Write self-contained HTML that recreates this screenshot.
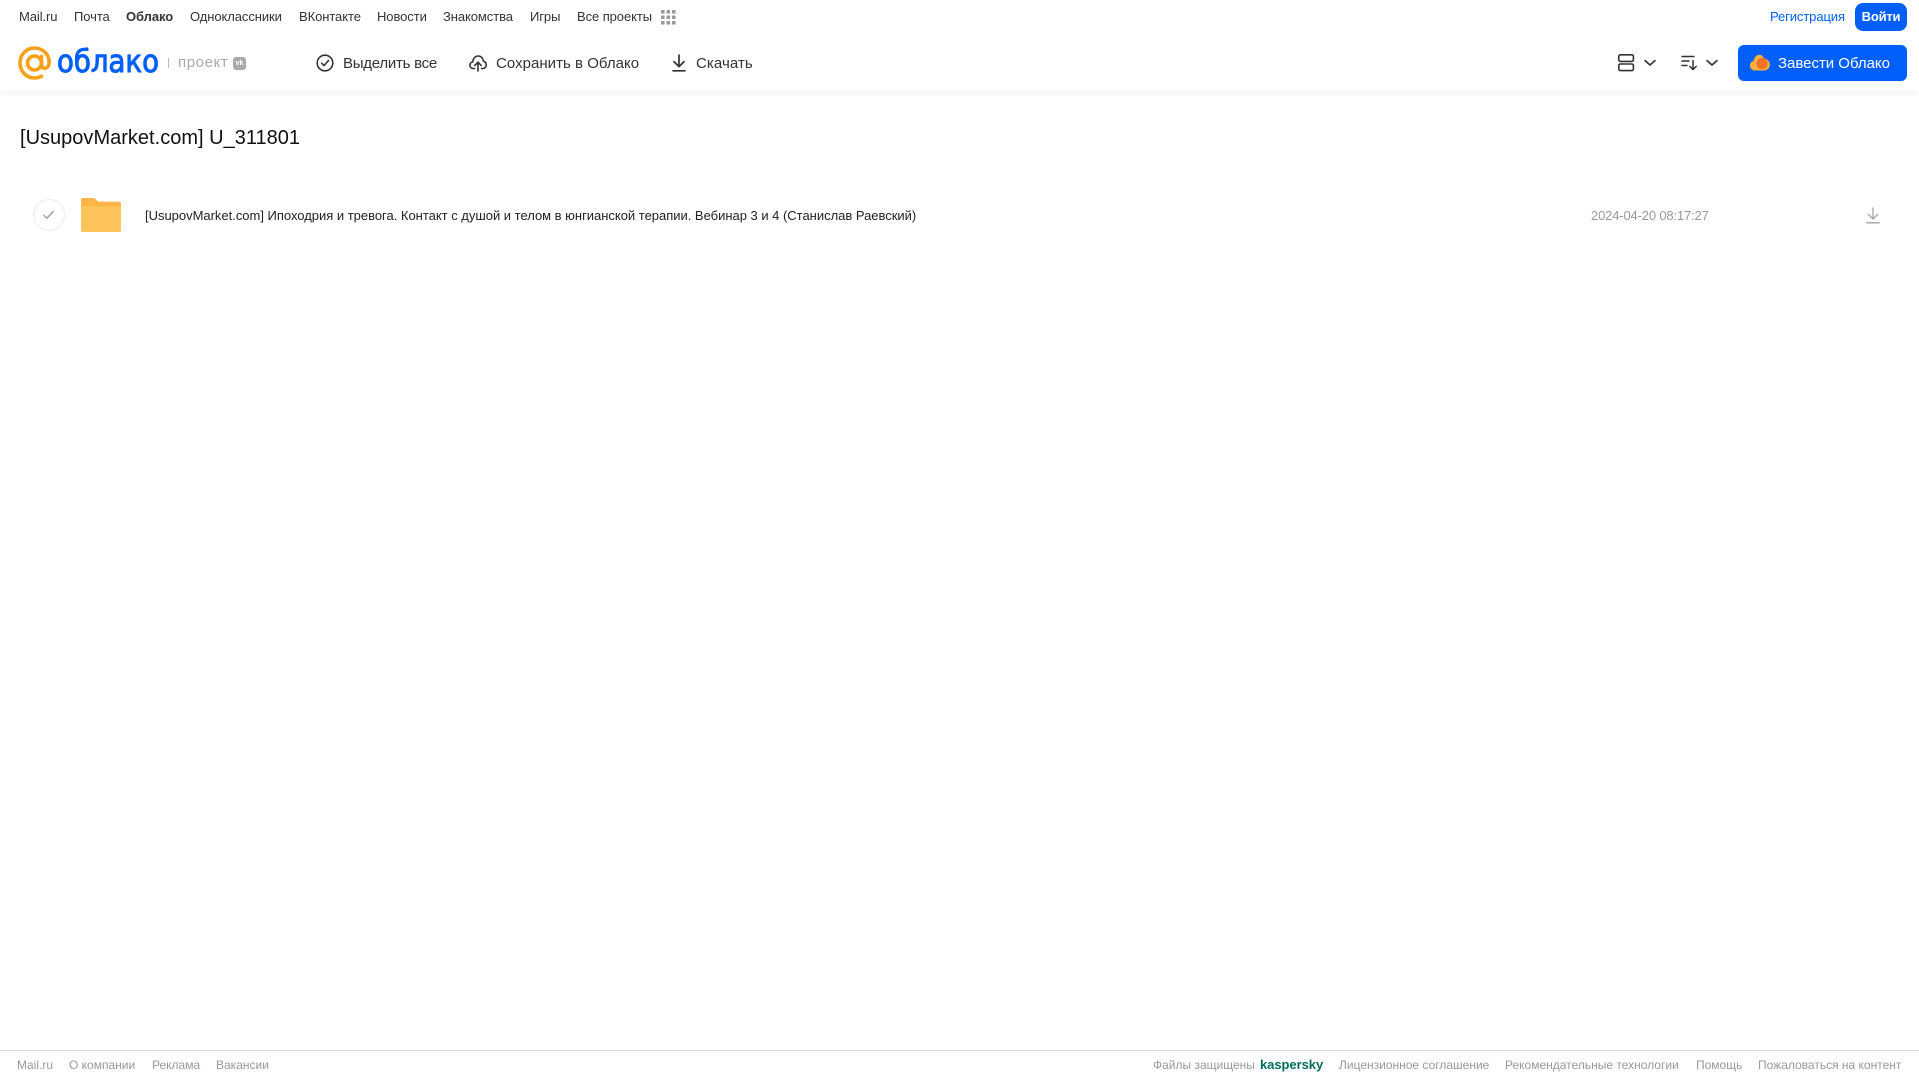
<!DOCTYPE html>
<html lang="ru">
<head>
<meta charset="utf-8">
<title>[UsupovMarket.com] U_311801</title>
<style>
html,body{margin:0;padding:0;width:1919px;height:1079px;overflow:hidden;background:#fff;font-family:"Liberation Sans",Arial,sans-serif;}
.t{position:absolute;white-space:nowrap;line-height:20px;}
.n{top:7px;font-size:13px;color:#333;letter-spacing:-.08px;}
.b{top:54px;font-size:15px;color:#333;}
.f{top:1055px;font-size:12px;color:#999;}
svg{position:absolute;display:block;overflow:visible;}
#shadow{position:absolute;left:0;top:0;width:1919px;height:91px;background:#fff;box-shadow:0 1px 8px rgba(0,0,0,.07);}
#cloudbtn{position:absolute;left:1738px;top:45px;width:169px;height:36px;background:#005ff9;border-radius:6px;}
#login{position:absolute;left:1855px;top:3px;width:52px;height:28px;background:#005ff9;border-radius:8px;color:#fff;font-size:13px;font-weight:bold;line-height:27px;text-align:center;letter-spacing:-.2px;}
#line{position:absolute;left:0;top:1050px;width:1919px;height:1px;background:#d9d9d9;}
</style>
</head>
<body>
<div id="shadow"></div>

<span class="t n" style="left:19px">Mail.ru</span>
<span class="t n" style="left:74px">Почта</span>
<span class="t n" style="left:126px;font-weight:bold">Облако</span>
<span class="t n" style="left:190px">Одноклассники</span>
<span class="t n" style="left:299px">ВКонтакте</span>
<span class="t n" style="left:377px">Новости</span>
<span class="t n" style="left:443px">Знакомства</span>
<span class="t n" style="left:530px">Игры</span>
<span class="t n" style="left:577px">Все проекты</span>
<svg style="left:661px;top:10px" width="15" height="15" viewBox="0 0 15 15" fill="#999">
<rect x="0" y="0" width="3.6" height="3.6" rx=".8"/><rect x="5.5" y="0" width="3.6" height="3.6" rx=".8"/><rect x="11" y="0" width="3.6" height="3.6" rx=".8"/>
<rect x="0" y="5.5" width="3.6" height="3.6" rx=".8"/><rect x="5.5" y="5.5" width="3.6" height="3.6" rx=".8"/><rect x="11" y="5.5" width="3.6" height="3.6" rx=".8"/>
<rect x="0" y="11" width="3.6" height="3.6" rx=".8"/><rect x="5.5" y="11" width="3.6" height="3.6" rx=".8"/><rect x="11" y="11" width="3.6" height="3.6" rx=".8"/>
</svg>

<span class="t" style="left:1770px;top:7px;font-size:13px;color:#005ff9;letter-spacing:-.1px">Регистрация</span>
<div id="login">Войти</div>

<svg style="left:18px;top:46px" width="34" height="35" viewBox="0 0 34 35" fill="none" stroke="#f9a01b" stroke-width="3.6">
<circle cx="16.5" cy="17" r="7"/>
<path d="M23.5 10.5V19.5C23.5 23 29.5 23.5 30.8 19C32.8 10.5 26 2 16.5 2C8 2 2 8.8 2 17C2 25.5 8.5 32 16.5 32C19.3 32 21.5 31.4 23.5 30.2" stroke-linecap="round"/>
</svg>
<span class="t" style="left:57px;top:44px;font-size:31px;line-height:36px;color:#005ff9;font-family:'DejaVu Sans',sans-serif;-webkit-text-stroke:1px #005ff9;transform-origin:0 50%;transform:scaleX(.89)">облако</span>
<div style="position:absolute;left:168px;top:58px;width:1px;height:10px;background:#bbb"></div>
<span class="t" style="left:178px;top:53px;font-size:15px;color:#aaa;letter-spacing:.6px">проект</span>
<div style="position:absolute;left:233px;top:57px;width:13px;height:13px;background:#aaa;border-radius:3px;color:#fff;font-size:7px;line-height:13px;text-align:center;font-weight:bold">vk</div>

<svg style="left:316px;top:54px" width="18" height="18" viewBox="0 0 18 18" fill="none" stroke="#333" stroke-width="1.6">
<circle cx="9" cy="9" r="7.8"/><path d="M5.6 9.2L8 11.6L12.4 6.6" stroke-linecap="round" stroke-linejoin="round"/>
</svg>
<span class="t b" style="left:343px;letter-spacing:-.25px">Выделить все</span>

<svg style="left:469px;top:54px" width="18" height="18" viewBox="0 0 18 18" fill="none" stroke="#333" stroke-width="1.6" stroke-linecap="round" stroke-linejoin="round">
<path d="M5.5 14.5H4.2C2.2 14.5 .9 13 .9 11.2C.9 9.4 2.2 8.2 3.7 8C4 4.6 6.3 2 9.2 2C12 2 14.1 4.2 14.5 7.2C16 7.6 17.2 9 17.2 10.9C17.2 13 15.7 14.5 13.8 14.5H12.5"/>
<path d="M9 17V8.4M5.8 11.4L9 8.2L12.2 11.4"/>
</svg>
<span class="t b" style="left:496px;letter-spacing:.03px">Сохранить в Облако</span>

<svg style="left:671px;top:54px" width="16" height="18" viewBox="0 0 16 18" fill="none" stroke="#333" stroke-width="1.7" stroke-linecap="round" stroke-linejoin="round">
<path d="M8 1V12.2M3 7.6L8 12.6L13 7.6M2 16.8H14"/>
</svg>
<span class="t b" style="left:696px;letter-spacing:.08px">Скачать</span>

<svg style="left:1618px;top:54px" width="16" height="18" viewBox="0 0 16 18" fill="none" stroke="#333" stroke-width="1.6">
<rect x=".8" y=".8" width="14.6" height="6.6" rx="1.6"/><rect x=".8" y="10" width="14.6" height="6.6" rx="1.6"/>
</svg>
<svg style="left:1644px;top:59px" width="12" height="8" viewBox="0 0 13 8" fill="none" stroke="#333" stroke-width="1.8" stroke-linecap="round" stroke-linejoin="round"><path d="M1.2 1.4L6.5 6.2L11.8 1.4"/></svg>
<svg style="left:1681px;top:55px" width="17" height="16" viewBox="0 0 17 16" fill="none" stroke="#333" stroke-width="1.5" stroke-linecap="round" stroke-linejoin="round">
<path d="M1 1.5H13M1 6H8M1 10.5H6M12 5.5V14.5M8.8 11.4L12 14.6L15.2 11.4"/>
</svg>
<svg style="left:1706px;top:59px" width="12" height="8" viewBox="0 0 13 8" fill="none" stroke="#333" stroke-width="1.8" stroke-linecap="round" stroke-linejoin="round"><path d="M1.2 1.4L6.5 6.2L11.8 1.4"/></svg>

<div id="cloudbtn"></div>
<svg style="left:1750px;top:54px" width="20" height="17" viewBox="0 0 20 17">
<path fill="#fbb03b" d="M5 16.5C2.2 16.5 0 14.3 0 11.6C0 9.3 1.6 7.4 3.6 6.9C4.3 3.2 6.6 .7 9.2 .7C11.4 .7 13.2 2.1 14.2 4.6C17.4 4.9 19.8 7.4 19.8 10.6C19.8 13.9 17.3 16.5 14 16.5Z"/>
<circle cx="12" cy="9.6" r="5.6" fill="#f4712b"/>
</svg>
<span class="t" style="left:1778px;top:54px;font-size:15px;color:#fff;letter-spacing:-.02px">Завести Облако</span>

<span class="t" style="left:20px;top:125px;font-size:20px;line-height:26px;color:#111;letter-spacing:.01px">[UsupovMarket.com] U_311801</span>

<div style="position:absolute;left:33px;top:199px;width:30px;height:30px;border:1px solid #ececec;border-radius:50%"></div>
<svg style="left:43px;top:210px" width="11" height="10" viewBox="0 0 11 10" fill="none" stroke="#999" stroke-width="1.4" stroke-linecap="round" stroke-linejoin="round"><path d="M1 5.4L4 8.2L10 1.6"/></svg>

<svg style="left:81px;top:198px" width="40" height="34" viewBox="0 0 40 34">
<path fill="#fdb549" d="M2 0H12C13.2 0 14.2.5 15 1.4L17 3.6H38C39.2 3.6 40 4.4 40 5.6V9H0V2C0 .8.8 0 2 0Z"/>
<path fill="#ffc35c" d="M0 8.4H40V32C40 33.2 39.2 34 38 34H2C.8 34 0 33.2 0 32Z"/>
</svg>

<span class="t" style="left:145px;top:206px;font-size:13px;color:#222;letter-spacing:-.015px">[UsupovMarket.com] Ипоходрия и тревога. Контакт с душой и телом в юнгианской терапии. Вебинар 3 и 4 (Станислав Раевский)</span>
<span class="t" style="left:1591px;top:206px;font-size:13px;color:#999;letter-spacing:-.16px">2024-04-20 08:17:27</span>
<svg style="left:1866px;top:207px" width="14" height="17" viewBox="0 0 14 17" fill="none" stroke="#a3a3a3" stroke-width="1.3" stroke-linecap="round" stroke-linejoin="round">
<path d="M7 1V11.6M2.4 7.4L7 12L11.6 7.4M.8 15.8H13.2"/>
</svg>

<div id="line"></div>
<span class="t f" style="left:17px">Mail.ru</span>
<span class="t f" style="left:69px">О компании</span>
<span class="t f" style="left:152px">Реклама</span>
<span class="t f" style="left:216px">Вакансии</span>
<span class="t f" style="left:1153px">Файлы защищены</span>
<span class="t f" style="left:1260px;font-size:13px;font-weight:bold;color:#006d5c;letter-spacing:-.05px">kaspersky</span>
<span class="t f" style="left:1339px">Лицензионное соглашение</span>
<span class="t f" style="left:1505px">Рекомендательные технологии</span>
<span class="t f" style="left:1696px">Помощь</span>
<span class="t f" style="left:1758px">Пожаловаться на контент</span>
</body>
</html>
